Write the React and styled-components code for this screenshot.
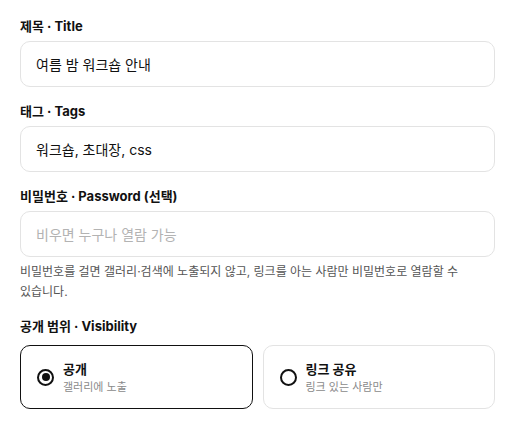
import React, { useState } from "react";
import styled, { createGlobalStyle } from "styled-components";

const GlobalStyle = createGlobalStyle`
  html, body {
    margin: 0;
    padding: 0;
    background: #ffffff;
  }
  body {
    font-family: Inter, "Noto Sans CJK KR", sans-serif;
    color: #111111;
  }
  * {
    box-sizing: border-box;
  }
`;

const Form = styled.form`
  width: 515px;
  padding: 17px 20px 20px;
  display: flex;
  flex-direction: column;
  gap: 15px;
`;

const Field = styled.div`
  display: flex;
  flex-direction: column;
`;

const Label = styled.label`
  font-size: 13px;
  font-weight: 700;
  line-height: 18px;
  margin-bottom: ${(props) => (props.wide ? "10px" : "6px")};
`;

const Input = styled.input`
  width: 100%;
  height: 46px;
  padding: 0 15px;
  border: 1px solid #e3e3e3;
  border-radius: 10px;
  font-family: inherit;
  font-size: 14px;
  color: #111111;
  background: #ffffff;
  outline: none;

  &::placeholder {
    color: #b3b3b3;
  }
`;

const Help = styled.p`
  margin: 5px 0 0;
  font-size: 12px;
  line-height: 20px;
  color: #555555;
  word-break: keep-all;
  padding-right: 20px;
`;

const Options = styled.div`
  display: grid;
  grid-template-columns: 1fr 1fr;
  gap: 10px;
`;

const Option = styled.label`
  display: flex;
  align-items: center;
  gap: 9px;
  height: 64px;
  padding: 0 16px;
  border: 1px solid ${(props) => (props.active ? "#111111" : "#e3e3e3")};
  border-radius: 10px;
  cursor: pointer;
`;

const Radio = styled.span`
  flex: none;
  width: 17px;
  height: 17px;
  border: 2px solid #111111;
  border-radius: 50%;
  display: flex;
  align-items: center;
  justify-content: center;

  &::after {
    content: "";
    width: 8px;
    height: 8px;
    border-radius: 50%;
    background: ${(props) => (props.checked ? "#111111" : "transparent")};
  }
`;

const OptionText = styled.div`
  display: flex;
  flex-direction: column;
`;

const OptionTitle = styled.span`
  font-size: 13px;
  font-weight: 700;
  line-height: 20px;
`;

const OptionSub = styled.span`
  font-size: 11px;
  line-height: 17px;
  color: #8a8a8a;
`;

const options = [
  { id: "public", title: "공개", sub: "갤러리에 노출" },
  { id: "link", title: "링크 공유", sub: "링크 있는 사람만" },
];

export default function App() {
  const [visibility, setVisibility] = useState("public");

  return (
    <>
      <GlobalStyle />
      <Form onSubmit={(e) => e.preventDefault()}>
        <Field>
          <Label>제목 · Title</Label>
          <Input defaultValue="여름 밤 워크숍 안내" />
        </Field>
        <Field>
          <Label>태그 · Tags</Label>
          <Input defaultValue="워크숍, 초대장, css" />
        </Field>
        <Field>
          <Label>비밀번호 · Password (선택)</Label>
          <Input type="text" placeholder="비우면 누구나 열람 가능" />
          <Help>
            비밀번호를 걸면 갤러리·검색에 노출되지 않고, 링크를 아는 사람만 비밀번호로 열람할 수
            있습니다.
          </Help>
        </Field>
        <Field>
          <Label wide>공개 범위 · Visibility</Label>
          <Options>
            {options.map((opt) => (
              <Option
                key={opt.id}
                active={visibility === opt.id}
                onClick={() => setVisibility(opt.id)}
              >
                <Radio checked={visibility === opt.id} />
                <OptionText>
                  <OptionTitle>{opt.title}</OptionTitle>
                  <OptionSub>{opt.sub}</OptionSub>
                </OptionText>
              </Option>
            ))}
          </Options>
        </Field>
      </Form>
    </>
  );
}
